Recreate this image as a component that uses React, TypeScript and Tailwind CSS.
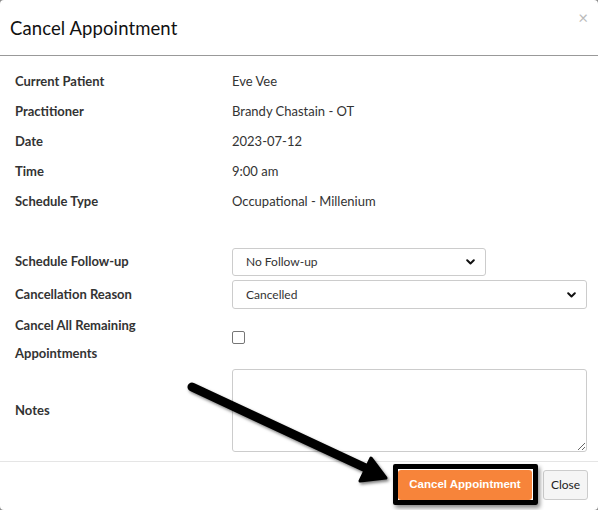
import React from "react";

const infoRows = [
  ["Current Patient", "Eve Vee"],
  ["Practitioner", "Brandy Chastain - OT"],
  ["Date", "2023-07-12"],
  ["Time", "9:00 am"],
  ["Schedule Type", "Occupational - Millenium"],
];

const Chevron = () => (
  <svg width="9" height="6" viewBox="0 0 9 6" className="pointer-events-none absolute right-[11px] top-1/2 -translate-y-1/2">
    <path d="M1.2 1.3 L4.5 4.5 L7.8 1.3" fill="none" stroke="#111" strokeWidth="2" strokeLinecap="round" strokeLinejoin="round" />
  </svg>
);

const Select = ({ value, className }: { value: string; className: string }) => (
  <div className={`relative ${className}`}>
    <select
      defaultValue={value}
      className="w-full h-full appearance-none rounded-[3px] border border-[#ccc] bg-white pl-[13px] text-[12px] text-[#333] outline-none"
    >
      <option>{value}</option>
    </select>
    <Chevron />
  </div>
);

export default function App() {
  return (
    <div className="w-[598px] h-[510px] bg-[#8a8a8a] font-['Lato',sans-serif] text-[#333]">
      <div className="relative w-full h-full bg-white rounded-[4px] overflow-hidden">
        {/* Header */}
        <div className="h-[56px] border-b border-[#999] flex items-center pl-[10px]">
          <h2 className="text-[18.5px] text-[#111] pt-[2px] tracking-[0.1px]">Cancel Appointment</h2>
          <span className="absolute right-[10px] top-[9px] text-[17px] leading-none text-[#bbb]">×</span>
        </div>

        {/* Body */}
        <div className="pt-[11px] pl-[15px] pr-[11px] pb-[9px] text-[13px]">
          {infoRows.map(([label, value]) => (
            <div key={label} className="h-[30px] flex items-center">
              <div className="w-[217px] font-bold">{label}</div>
              <div>{value}</div>
            </div>
          ))}

          <div className="h-[31px]" />

          <div className="h-[28px] flex items-center mb-[4px]">
            <div className="w-[217px] font-bold">Schedule Follow-up</div>
            <Select value="No Follow-up" className="w-[254px] h-[28px]" />
          </div>

          <div className="h-[29px] flex items-center mb-[2px]">
            <div className="w-[217px] font-bold">Cancellation Reason</div>
            <Select value="Cancelled" className="flex-1 h-[29px]" />
          </div>

          <div className="flex items-center mb-[2px]">
            <div className="w-[217px] font-bold leading-[28px]">
              Cancel All Remaining
              <br />
              Appointments
            </div>
            <input
              type="checkbox"
              className="appearance-none w-[13px] h-[13px] border border-[#767676] rounded-[2px] bg-white -mt-[3px]"
            />
          </div>

          <div className="flex items-center">
            <div className="w-[217px] font-bold">Notes</div>
            <textarea className="flex-1 h-[83px] rounded-[3px] border border-[#ccc] outline-none" />
          </div>
        </div>

        {/* Footer */}
        <div className="border-t border-[#e5e5e5] flex justify-end gap-[11px] pt-[8px] pr-[10px]">
          <button className="w-[134px] h-[30px] rounded-[3px] bg-[#f7843a] text-white text-[11.5px] font-bold font-['Liberation_Sans',sans-serif]">
            Cancel Appointment
          </button>
          <button className="w-[45px] h-[30px] rounded-[3px] border border-[#ccc] bg-[#f5f5f5] text-[12px] text-[#222]">
            Close
          </button>
        </div>

        {/* Annotation frame */}
        <div className="absolute left-[393px] top-[464px] w-[145px] h-[41px] border-[5px] border-black rounded-[2px] shadow-[2px_3px_4px_rgba(0,0,0,0.45)] pointer-events-none" />

        {/* Annotation arrow */}
        <svg className="absolute left-0 top-0 pointer-events-none" width="598" height="510">
          <defs>
            <filter id="sh" x="-20%" y="-20%" width="140%" height="140%">
              <feDropShadow dx="1.5" dy="2" stdDeviation="1.5" floodColor="#000" floodOpacity="0.5" />
            </filter>
          </defs>
          <g filter="url(#sh)">
            <line x1="192" y1="387" x2="370" y2="470" stroke="#000" strokeWidth="9" strokeLinecap="round" />
            <polygon points="386,478 360,481 371,458" fill="#000" stroke="#000" strokeWidth="3" strokeLinejoin="round" />
          </g>
        </svg>
      </div>
    </div>
  );
}
